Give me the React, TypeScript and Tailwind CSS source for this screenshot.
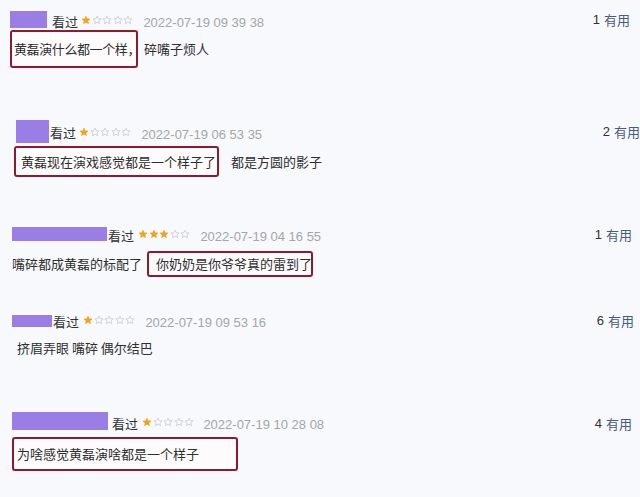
import React from "react";

const cjk = { fontFamily: '"Noto Sans CJK SC", "Noto Sans", sans-serif' };
const lat = { fontFamily: '"Liberation Sans", Arial, sans-serif' };

function Star({ filled }: { filled: boolean }) {
  return (
    <svg width="10" height="10" viewBox="0 0 24 24" className="shrink-0">
      <path
        d="M12 2.5l2.9 6.3 6.9.7-5.2 4.6 1.5 6.8L12 17.4l-6.1 3.5 1.5-6.8-5.2-4.6 6.9-.7z"
        fill={filled ? "#f2a516" : "none"}
        stroke={filled ? "#e49a10" : "#c4c7cd"}
        strokeWidth={filled ? 1 : 1.8}
        strokeLinejoin="round"
      />
    </svg>
  );
}

function Stars({ n }: { n: number }) {
  return (
    <div className="flex items-center gap-[0.6px]">
      {[0, 1, 2, 3, 4].map((i) => (
        <Star key={i} filled={i < n} />
      ))}
    </div>
  );
}

function Useful({ n }: { n: number }) {
  return (
    <div className="flex items-center gap-[4px] text-[13px] leading-none">
      <span className="text-[#333]" style={lat}>{n}</span>
      <span className="text-[#4a5a7c]" style={cjk}>有用</span>
    </div>
  );
}

function Date({ d }: { d: string }) {
  return (
    <span className="text-[13px] leading-none text-[#a4a6aa] whitespace-pre" style={lat}>
      {d}
    </span>
  );
}

function Seen() {
  return (
    <span className="text-[13px] leading-none text-[#333]" style={cjk}>
      看过
    </span>
  );
}

export default function App() {
  return (
    <div className="w-[640px] h-[497px] overflow-hidden bg-[#f7f9fc] text-[#2e2e2e]" style={cjk}>
      {/* Comment 1 */}
      <div className="h-[100px] pt-[11px]">
        <div className="flex items-center justify-between pl-[10px] pr-[10px] h-[17px]">
          <div className="flex items-center">
            <div className="w-[37px] h-[17px] bg-[#9a7ee6]" />
            <div className="ml-[5px]"><Seen /></div>
            <div className="ml-[3px]"><Stars n={1} /></div>
            <div className="ml-[10px]"><Date d="2022-07-19 09 39 38" /></div>
          </div>
          <Useful n={1} />
        </div>
        <div className="flex items-center pl-[10px] mt-[2px]">
          <div className="w-[128px] h-[38px] border-2 border-[#8e1b2c] rounded-[3px] bg-[#fdfbfc] flex items-center pl-[2px] text-[13px] tracking-[-0.4px] whitespace-nowrap">
            黄磊演什么都一个样，
          </div>
          <span className="ml-[6px] text-[13px]">碎嘴子烦人</span>
        </div>
      </div>

      {/* Comment 2 */}
      <div className="h-[110px] pt-[20px]">
        <div className="flex items-center justify-between pl-[16px] pr-[0px] h-[23px]">
          <div className="flex items-center">
            <div className="w-[33px] h-[23px] bg-[#9a7ee6]" />
            <div className="ml-[1px] mt-[-2px]"><Seen /></div>
            <div className="ml-[3px]"><Stars n={1} /></div>
            <div className="ml-[10px]"><Date d="2022-07-19 06 53 35" /></div>
          </div>
          <Useful n={2} />
        </div>
        <div className="flex items-center pl-[14px] mt-[3px]">
          <div className="w-[205px] h-[31px] border-2 border-[#8e1b2c] rounded-[3px] bg-[#fdfbfc] flex items-center pl-[5px] text-[13px] whitespace-nowrap">
            黄磊现在演戏感觉都是一个样子了
          </div>
          <span className="ml-[12px] text-[13px]">都是方圆的影子</span>
        </div>
      </div>

      {/* Comment 3 */}
      <div className="h-[90px] pt-[17px]">
        <div className="flex items-center justify-between pl-[12px] pr-[8px] h-[14px]">
          <div className="flex items-center">
            <div className="w-[95px] h-[14px] bg-[#9a7ee6]" />
            <div className="ml-[1px]"><Seen /></div>
            <div className="ml-[4px]"><Stars n={3} /></div>
            <div className="ml-[10px]"><Date d="2022-07-19 04 16 55" /></div>
          </div>
          <Useful n={1} />
        </div>
        <div className="flex items-center pl-[12px] mt-[10px]">
          <span className="text-[13px] whitespace-nowrap">嘴碎都成黄磊的标配了</span>
          <div className="ml-[5px] w-[166px] h-[26px] border-2 border-[#8e1b2c] rounded-[3px] bg-[#fdfbfc] flex items-center pl-[7px] text-[13px] whitespace-nowrap">
            你奶奶是你爷爷真的雷到了
          </div>
        </div>
      </div>

      {/* Comment 4 */}
      <div className="h-[90px] pt-[13px]">
        <div className="flex items-center justify-between pl-[12px] pr-[6px] h-[14px]">
          <div className="flex items-center">
            <div className="w-[40px] h-[12px] mt-[2px] bg-[#9a7ee6]" />
            <div className="ml-[1px]"><Seen /></div>
            <div className="ml-[4px]"><Stars n={1} /></div>
            <div className="ml-[10px]"><Date d="2022-07-19 09 53 16" /></div>
          </div>
          <Useful n={6} />
        </div>
        <div className="pl-[17px] mt-[14px] text-[13px] whitespace-pre leading-none">
          挤眉弄眼 嘴碎 偶尔结巴
        </div>
      </div>

      {/* Comment 5 */}
      <div className="h-[107px] pt-[22px]">
        <div className="flex items-center justify-between pl-[12px] pr-[8px] h-[18px]">
          <div className="flex items-center">
            <div className="w-[96px] h-[18px] bg-[#9a7ee6]" />
            <div className="ml-[4px] mt-[2px]"><Seen /></div>
            <div className="ml-[4px] mt-[2px]"><Stars n={1} /></div>
            <div className="ml-[9px] mt-[2px]"><Date d="2022-07-19 10 28 08" /></div>
          </div>
          <div className="mt-[4px]"><Useful n={4} /></div>
        </div>
        <div className="pl-[12px] mt-[7px]">
          <div className="w-[226px] h-[34px] border-2 border-[#8e1b2c] rounded-[3px] bg-[#fdfbfc] flex items-center pl-[3px] text-[13px] whitespace-nowrap">
            为啥感觉黄磊演啥都是一个样子
          </div>
        </div>
      </div>
    </div>
  );
}
